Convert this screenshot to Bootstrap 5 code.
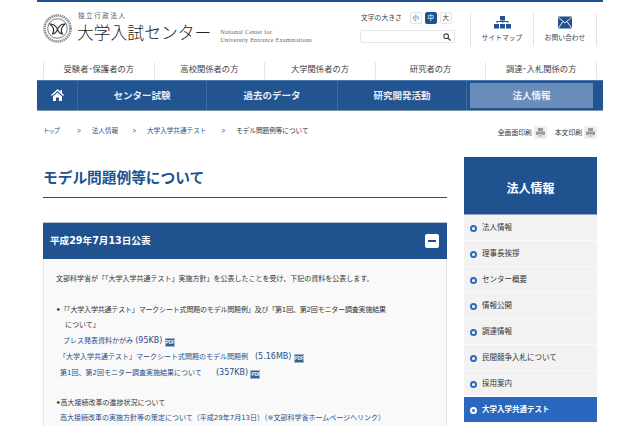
<!DOCTYPE html>
<html lang="ja">
<head>
    <meta charset="UTF-8">
    <meta name="viewport" content="width=device-width, initial-scale=1.0">
    <title>モデル問題例等について</title>
    <link href="https://cdn.jsdelivr.net/npm/bootstrap@5.3.0/dist/css/bootstrap.min.css" rel="stylesheet">
    <style>
        html, body { height: 426px; overflow: hidden; }
        body { font-family: "Liberation Sans", "Noto Sans CJK JP", sans-serif; font-size: 7px; color: #333; background: #fff; }
        a { text-decoration: none; color: #1f4f8a; }
        .page-wrap { width: 566px; margin-left: 37px; border-top: 2px solid #20528f; }

        .site-head { height: 58px; padding-left: 6px; }
        .logo-mark { width: 29px; height: 29px; margin-top: 12px; }
        .logo-text { margin-left: 5px; padding-top: 9px; }
        .logo-sub { font-size: 6.5px; line-height: 9px; letter-spacing: 1.6px; color: #555; font-family: "Noto Sans CJK JP", serif; margin-left: 1px; }
        .logo-name { font-size: 16.8px; line-height: 25px; color: #222; font-family: "Noto Sans CJK JP", sans-serif; font-weight: 300; }
        .logo-en { font-family: "Liberation Serif", serif; font-size: 6.2px; line-height: 7.5px; color: #666; letter-spacing: .2px; margin-left: 9px; margin-top: 26px; }
        .head-tools { width: 95px; margin-left: auto; padding-top: 10px; }
        .size-label { font-size: 6.8px; color: #444; margin-right: 8px; margin-left: 1px; white-space: nowrap; }
        .size-btn { width: 12px; height: 12px; border: 1px solid #e4e4e4; border-radius: 2px; font-size: 6.5px; line-height: 10px; text-align: center; margin-right: 3px; color: #444; flex: none; }
        .size-btn.is-on { background: #20528f; border-color: #20528f; color: #fff; }
        .search-box { height: 13px; margin-top: 6px; border: 1px solid #e6e6e6; border-radius: 2px; padding-right: 3px; }
        .head-links { margin-left: 15px; margin-top: 11px; height: 33px; margin-right: 6px; }
        .head-link { width: 63px; height: 33px; border-left: 1px solid #e2e2e2; font-size: 6.8px; color: #444; }
        .head-link:last-child { border-right: 1px solid #e2e2e2; width: 64px; }
        .head-link svg { height: 13px; margin-top: 3px; margin-bottom: 4px; }

        .sub-nav { height: 20px; padding: 0 6px; }
        .sub-item { flex: 1 1 0; height: 17px; margin-top: 2px; border-left: 1px solid #e6e6e6; color: #444; font-size: 8.3px; text-align: center; line-height: 15px; }
        .sub-item:last-child { border-right: 1px solid #e6e6e6; }

        .main-nav { height: 31px; background: #22548f; border-top: 1px solid #4a77ad; border-bottom: 1px solid #7d96a8; }
        .main-item { color: #e6edf5; font-size: 9.5px; font-weight: bold; text-align: center; line-height: 29px; border-right: 1px solid #3a6aa3; }
        .main-home { width: 41px; }
        .main-home svg { width: 13px; height: 12px; margin-top: 8px; }
        .main-wide { width: 129px; }
        .main-wide.w-mid { width: 131px; }
        .main-active { width: 123px; height: 25px; margin: 2px 0 0 3px; background: #6a8cb8; color: #edf2f7; line-height: 25px; font-size: 9.5px; font-weight: bold; text-align: center; }

        .crumb-row { height: 46px; padding: 15px 6px 0; font-size: 6.6px; line-height: 10px; }
        .crumb-top { letter-spacing: -1.300px; }
        .crumb-row .sep { color: #444; margin: 0 11px 0 18px; }
        .crumb-row .sep.s-two { margin-left: 14px; }
        .crumb-row .sep.s-three { margin-left: 15px; }
        .print-link { font-size: 6.8px; color: #333; margin-left: 8px; margin-top: 2px; }
        .print-ico { width: 13px; height: 13px; background: #eee; border-radius: 1px; margin-left: 2px; padding: 2px; }

        .body-row { padding: 0 6px; gap: 17px; }
        .main-col { width: 404px; }
        .side-col { width: 133px; }
        .page-title { font-size: 14.7px; line-height: 20px; font-weight: bold; color: #20528f; padding-top: 10px; height: 41px; margin: 0; border-bottom: 1px solid #20527f; font-family: "Noto Sans CJK JP", sans-serif; }
        .notice-head { margin-top: 24px; height: 37px; background: #20528f; color: #fff; padding: 0 8px 0 7px; font-size: 9.6px; font-weight: bold; border-top: 1px solid #b9c6d6; font-family: "DejaVu Sans", "Noto Sans CJK JP", sans-serif; }
        .toggle-box { width: 14px; height: 14px; background: #fff; border-radius: 2px; }
        .toggle-box span { width: 8px; height: 2px; background: #20528f; }
        .notice-body { background: #f9f9f9; border-left: 1px solid #e5e5e5; border-right: 1px solid #e5e5e5; padding: 13px 10px 0 12px; line-height: 15px; height: 167px; font-size: 7px; font-family: "DejaVu Sans", "Noto Sans CJK JP", sans-serif; overflow: hidden; }
        .gap-line { height: 15px; }
        .gap-line.g-top { height: 16px; }
        .tight-line { letter-spacing: -.18px; white-space: nowrap; }
        .bullet-mark { font-weight: bold; color: #222; }
        .ind-1 { padding-left: 9px; }
        .ind-2 { padding-left: 7px; }
        .ind-3 { padding-left: 3px; }
        .ind-4 { padding-left: 4px; }
        .file-size { font-size: 8px; }
        .file-size.f-gap { margin-left: 5px; }
        .pdf-tag { display: inline-block; width: 10px; height: 9px; background: #2f6193; color: #fff; border: 1px solid #9db4cc; font-size: 4.5px; line-height: 7px; text-align: center; vertical-align: -1px; font-weight: bold; font-family: "Liberation Sans", sans-serif; }

        .side-head { height: 58px; padding-top: 4px; background: #20528f; color: #fff; font-size: 12px; font-weight: bold; border-bottom: 1px solid #8ea6c2; font-family: "Noto Sans CJK JP", sans-serif; }
        .side-item { height: 26px; background: #f2f2f2; border-bottom: 1px solid #fafafa; padding: 1px 0 0 6px; font-size: 7.5px; color: #333; }
        .side-item .dot { width: 7px; height: 7px; border-radius: 50%; border: 2px solid #2a68bf; background: #fff; margin-right: 5px; flex: none; }
        .side-item.is-on { background: #2a68bf; color: #fff; font-weight: bold; }
        .side-item.is-on .dot { border-color: #fff; background: #2a68bf; }
    </style>
</head>
<body>
<div class="page-wrap">
    <!-- header -->
    <div class="site-head d-flex">
        <svg class="logo-mark" viewBox="0 0 29 29">
            <circle cx="14.5" cy="14.5" r="13" fill="none" stroke="#8a8a8a" stroke-width="2.6" stroke-dasharray="1.4 .7"/>
            <circle cx="14.5" cy="14.5" r="9.8" fill="#fff" stroke="#555" stroke-width=".8"/>
            <path d="M7 10c3 0 6 2 7.500 5-1 3-3 5-5 5 2-3 1-7-2.500-10zM22 10c-3 0-6 2-7.500 5 1 3 3 5 5 5-2-3-1-7 2.500-10z" fill="none" stroke="#333" stroke-width="1.100"/>
        </svg>
        <div class="logo-text">
            <div class="logo-sub">独立行政法人</div>
            <div class="logo-name">大学入試センター</div>
        </div>
        <div class="logo-en">National Center for<br>University Entrance Examinations</div>
        <div class="head-tools">
            <div class="d-flex align-items-center">
                <span class="size-label">文字の大きさ</span>
                <span class="size-btn">小</span><span class="size-btn is-on">中</span><span class="size-btn">大</span>
            </div>
            <div class="search-box d-flex align-items-center justify-content-end">
                <svg width="8" height="8" viewBox="0 0 8 8"><circle cx="3.200" cy="3.200" r="2.300" fill="none" stroke="#444" stroke-width="1.100"/><path d="M5 5l2.500 2.500" stroke="#444" stroke-width="1.400"/></svg>
            </div>
        </div>
        <div class="head-links d-flex">
            <div class="head-link d-flex flex-column align-items-center">
                <svg width="17" height="13" viewBox="0 0 17 13" fill="#20528f"><rect x="6" y="0" width="5" height="4.500"/><path d="M2.500 7V5h12v2h-1V6H9v1H8V6H3.500v1z"/><rect x="0" y="8" width="5" height="4.500"/><rect x="6" y="8" width="5" height="4.500"/><rect x="12" y="8" width="5" height="4.500"/></svg>
                <span>サイトマップ</span>
            </div>
            <div class="head-link d-flex flex-column align-items-center">
                <svg width="14" height="13" viewBox="0 0 14 13"><rect width="14" height="12" y=".5" rx="1" fill="#20528f"/><path d="M.5 1.500L7 7l6.500-5.500M.5 12L5 5.500M13.500 12L9 5.500" fill="none" stroke="#fff" stroke-width=".9"/></svg>
                <span>お問い合わせ</span>
            </div>
        </div>
    </div>

    <!-- audience links -->
    <div class="sub-nav d-flex">
        <div class="sub-item">受験者･保護者の方</div>
        <div class="sub-item">高校関係者の方</div>
        <div class="sub-item">大学関係者の方</div>
        <div class="sub-item">研究者の方</div>
        <div class="sub-item">調達･入札関係の方</div>
    </div>

    <!-- main menu -->
    <div class="main-nav d-flex">
        <div class="main-item main-home">
            <svg viewBox="0 0 13 12" fill="#fff" class="d-block mx-auto"><path d="M6.500 0L0 6l1 1 5.500-5 5.500 5 1-1-2-1.900V1H9.500v1.700z"/><path d="M2 7.500L6.500 3.500 11 7.500V12H8V8.500H5V12H2z"/></svg>
        </div>
        <div class="main-item main-wide">センター試験</div>
        <div class="main-item main-wide w-mid">過去のデータ</div>
        <div class="main-item main-wide">研究開発活動</div>
        <div class="main-active">法人情報</div>
    </div>

    <!-- breadcrumb and print -->
    <div class="crumb-row d-flex">
        <a href="#" class="crumb-top">トップ</a><span class="sep">&gt;</span>
        <a href="#">法人情報</a><span class="sep s-two">&gt;</span>
        <a href="#">大学入学共通テスト</a><span class="sep s-three">&gt;</span>
        <span>モデル問題例等について</span>
        <div class="ms-auto d-flex">
            <span class="print-link">全画面印刷</span>
            <span class="print-ico d-block"><svg viewBox="0 0 9 9" class="d-block" fill="#999"><rect x="2" y="0" width="5" height="3"/><rect x="0" y="3.500" width="9" height="3.500"/><rect x="2" y="6" width="5" height="3" fill="#ccc"/></svg></span>
            <span class="print-link">本文印刷</span>
            <span class="print-ico d-block"><svg viewBox="0 0 9 9" class="d-block" fill="#999"><rect x="2" y="0" width="5" height="3"/><rect x="0" y="3.500" width="9" height="3.500"/><rect x="2" y="6" width="5" height="3" fill="#ccc"/></svg></span>
        </div>
    </div>

    <div class="body-row d-flex">
        <div class="main-col">
            <h1 class="page-title">モデル問題例等について</h1>
            <div class="notice-head d-flex align-items-center justify-content-between">
                <span>平成29年7月13日公表</span>
                <span class="toggle-box d-flex align-items-center justify-content-center"><span class="d-block"></span></span>
            </div>
            <div class="notice-body">
                <div>文部科学省が「「大学入学共通テスト」実施方針」を公表したことを受け、下記の資料を公表します。</div>
                <div class="gap-line g-top"></div>
                <div class="tight-line"><span class="bullet-mark">•</span>「「大学入学共通テスト」マークシート式問題のモデル問題例」及び「第1回、第2回モニター調査実施結果</div>
                <div class="ind-1">について」</div>
                <div class="ind-2"><a href="#">プレス発表資料かがみ <span class="file-size">(95KB)</span></a> <span class="pdf-tag">PDF</span></div>
                <div class="ind-3"><a href="#">「大学入学共通テスト」マークシート式問題のモデル問題例　<span class="file-size">(5.16MB)</span></a> <span class="pdf-tag">PDF</span></div>
                <div class="ind-4"><a href="#">第1回、第2回モニター調査実施結果について　 <span class="file-size f-gap">(357KB)</span></a> <span class="pdf-tag">PDF</span></div>
                <div class="gap-line"></div>
                <div><span class="bullet-mark">•</span>高大接続改革の進捗状況について</div>
                <div class="ind-4"><a href="#">高大接続改革の実施方針等の策定について（平成29年7月13日）（※文部科学省ホームページへリンク）</a></div>
            </div>
        </div>
        <div class="side-col">
            <div class="side-head d-flex align-items-center justify-content-center">法人情報</div>
            <div class="side-item d-flex align-items-center"><span class="dot"></span>法人情報</div>
            <div class="side-item d-flex align-items-center"><span class="dot"></span>理事長挨拶</div>
            <div class="side-item d-flex align-items-center"><span class="dot"></span>センター概要</div>
            <div class="side-item d-flex align-items-center"><span class="dot"></span>情報公開</div>
            <div class="side-item d-flex align-items-center"><span class="dot"></span>調達情報</div>
            <div class="side-item d-flex align-items-center"><span class="dot"></span>民間競争入札について</div>
            <div class="side-item d-flex align-items-center"><span class="dot"></span>採用案内</div>
            <div class="side-item is-on d-flex align-items-center"><span class="dot"></span>大学入学共通テスト</div>
        </div>
    </div>
</div>
<script src="https://cdn.jsdelivr.net/npm/bootstrap@5.3.0/dist/js/bootstrap.bundle.min.js"></script>
</body>
</html>
